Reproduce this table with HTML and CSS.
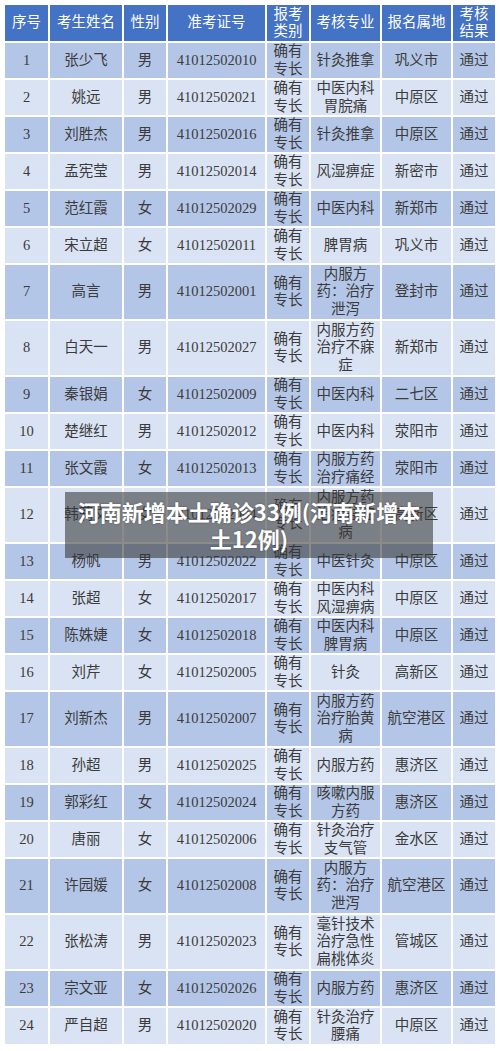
FILE: index.html
```html
<!DOCTYPE html>
<html lang="zh-CN">
<head>
<meta charset="utf-8">
<title>考核结果</title>
<link rel="stylesheet" href="styles.css">
</head>
<body>
<div class="page">
  <table class="grid">
    <colgroup>
      <col class="c1"><col class="c2"><col class="c3"><col class="c4"><col class="c5"><col class="c6"><col class="c7"><col class="c8">
    </colgroup>
    <thead>
      <tr class="head">
        <th>序号</th><th>考生姓名</th><th>性别</th><th>准考证号</th><th>报考<br>类别</th><th>考核专业</th><th>报名属地</th><th>考核<br>结果</th>
      </tr>
    </thead>
    <tbody>
      <tr class="dark"><td>1</td><td>张少飞</td><td>男</td><td>41012502010</td><td>确有<br>专长</td><td>针灸推拿</td><td>巩义市</td><td>通过</td></tr>
      <tr class="light"><td>2</td><td>姚远</td><td>男</td><td>41012502021</td><td>确有<br>专长</td><td>中医内科<br>胃脘痛</td><td>中原区</td><td>通过</td></tr>
      <tr class="dark"><td>3</td><td>刘胜杰</td><td>男</td><td>41012502016</td><td>确有<br>专长</td><td>针灸推拿</td><td>中原区</td><td>通过</td></tr>
      <tr class="light"><td>4</td><td>孟宪莹</td><td>男</td><td>41012502014</td><td>确有<br>专长</td><td>风湿痹症</td><td>新密市</td><td>通过</td></tr>
      <tr class="dark"><td>5</td><td>范红霞</td><td>女</td><td>41012502029</td><td>确有<br>专长</td><td>中医内科</td><td>新郑市</td><td>通过</td></tr>
      <tr class="light"><td>6</td><td>宋立超</td><td>女</td><td>41012502011</td><td>确有<br>专长</td><td>脾胃病</td><td>巩义市</td><td>通过</td></tr>
      <tr class="dark tall"><td>7</td><td>高言</td><td>男</td><td>41012502001</td><td>确有<br>专长</td><td>内服方<br>药：治疗<br>泄泻</td><td>登封市</td><td>通过</td></tr>
      <tr class="light tall"><td>8</td><td>白天一</td><td>男</td><td>41012502027</td><td>确有<br>专长</td><td>内服方药<br>治疗不寐<br>症</td><td>新郑市</td><td>通过</td></tr>
      <tr class="dark"><td>9</td><td>秦银娟</td><td>女</td><td>41012502009</td><td>确有<br>专长</td><td>中医内科</td><td>二七区</td><td>通过</td></tr>
      <tr class="light"><td>10</td><td>楚继红</td><td>男</td><td>41012502012</td><td>确有<br>专长</td><td>中医内科</td><td>荥阳市</td><td>通过</td></tr>
      <tr class="dark"><td>11</td><td>张文霞</td><td>女</td><td>41012502013</td><td>确有<br>专长</td><td>内服方药<br>治疗痛经</td><td>荥阳市</td><td>通过</td></tr>
      <tr class="light tall"><td>12</td><td>韩莉文</td><td>女</td><td>41012502004</td><td>确有<br>专长</td><td>内服方药<br>治疗盆腔<br>病</td><td>高新区</td><td>通过</td></tr>
      <tr class="dark"><td>13</td><td>杨帆</td><td>男</td><td>41012502022</td><td>确有<br>专长</td><td>中医针灸</td><td>中原区</td><td>通过</td></tr>
      <tr class="light"><td>14</td><td>张超</td><td>女</td><td>41012502017</td><td>确有<br>专长</td><td>中医内科<br>风湿痹病</td><td>中原区</td><td>通过</td></tr>
      <tr class="dark"><td>15</td><td>陈姝婕</td><td>女</td><td>41012502018</td><td>确有<br>专长</td><td>中医内科<br>脾胃病</td><td>中原区</td><td>通过</td></tr>
      <tr class="light"><td>16</td><td>刘芹</td><td>女</td><td>41012502005</td><td>确有<br>专长</td><td>针灸</td><td>高新区</td><td>通过</td></tr>
      <tr class="dark tall"><td>17</td><td>刘新杰</td><td>男</td><td>41012502007</td><td>确有<br>专长</td><td>内服方药<br>治疗胎黄<br>病</td><td>航空港区</td><td>通过</td></tr>
      <tr class="light"><td>18</td><td>孙超</td><td>男</td><td>41012502025</td><td>确有<br>专长</td><td>内服方药</td><td>惠济区</td><td>通过</td></tr>
      <tr class="dark"><td>19</td><td>郭彩红</td><td>女</td><td>41012502024</td><td>确有<br>专长</td><td>咳嗽内服<br>方药</td><td>惠济区</td><td>通过</td></tr>
      <tr class="light"><td>20</td><td>唐丽</td><td>女</td><td>41012502006</td><td>确有<br>专长</td><td>针灸治疗<br>支气管</td><td>金水区</td><td>通过</td></tr>
      <tr class="dark tall"><td>21</td><td>许园媛</td><td>女</td><td>41012502008</td><td>确有<br>专长</td><td>内服方<br>药：治疗<br>泄泻</td><td>航空港区</td><td>通过</td></tr>
      <tr class="light tall"><td>22</td><td>张松涛</td><td>男</td><td>41012502023</td><td>确有<br>专长</td><td>毫针技术<br>治疗急性<br>扁桃体炎</td><td>管城区</td><td>通过</td></tr>
      <tr class="dark"><td>23</td><td>宗文亚</td><td>女</td><td>41012502026</td><td>确有<br>专长</td><td>内服方药</td><td>惠济区</td><td>通过</td></tr>
      <tr class="light"><td>24</td><td>严自超</td><td>男</td><td>41012502020</td><td>确有<br>专长</td><td>针灸治疗<br>腰痛</td><td>中原区</td><td>通过</td></tr>
    </tbody>
  </table>
  <div class="caption">
    <p class="caption-text">河南新增本土确诊33例(河南新增本<br>土12例)</p>
  </div>
</div>
</body>
</html>
```

FILE: styles.css
```css
html, body {
  margin: 0;
  padding: 0;
  background: #ffffff;
}

.page {
  position: relative;
  padding: 5px 5px 0 5px;
  width: 490px;
}

.grid {
  width: 490px;
  table-layout: fixed;
  border-collapse: collapse;
  font-family: "Liberation Serif", "Noto Sans CJK SC", serif;
  font-size: 14.5px;
  line-height: 17.5px;
  color: #3b3b3b;
}

.c1 { width: 44px; }
.c2 { width: 74px; }
.c3 { width: 44px; }
.c4 { width: 99px; }
.c5 { width: 44px; }
.c6 { width: 71px; }
.c7 { width: 71px; }
.c8 { width: 43px; }

.grid th,
.grid td {
  border: 2px solid #ffffff;
  padding: 0;
  text-align: center;
  vertical-align: middle;
  font-weight: normal;
  white-space: nowrap;
  overflow: visible;
}

.grid .head th {
  border-top: 0;
  background: #4472c4;
  color: #ffffff;
  font-size: 14.5px;
}

.grid tr:last-child td {
  border-bottom: 0;
}

.grid th:first-child,
.grid td:first-child { border-left: 0; }
.grid th:last-child,
.grid td:last-child { border-right: 0; }

.grid tr.dark td { background: #b4c6e7; }
.grid tr.light td { background: #dae3f3; }

.grid .head { height: 37px; }
.grid tbody tr { height: 37px; }
.grid tbody tr.tall { height: 56px; }

.caption {
  position: absolute;
  left: 65px;
  top: 492px;
  width: 368px;
  height: 66px;
  background: rgba(55, 55, 55, 0.58);
  display: flex;
  align-items: center;
  justify-content: center;
}

.caption-text {
  margin: 0;
  padding: 0;
  text-align: center;
  color: #ffffff;
  font-family: "Noto Sans CJK SC", "Noto Sans", sans-serif;
  font-weight: 700;
  font-size: 22px;
  line-height: 27px;
  white-space: nowrap;
  text-shadow: 0 0 2px rgba(0,0,0,0.35);
}
```
